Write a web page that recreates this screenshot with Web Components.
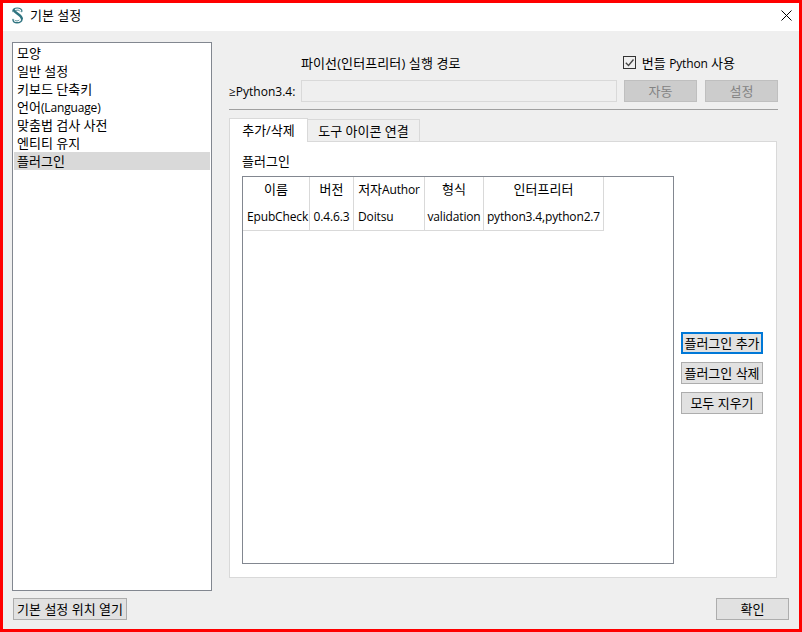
<!DOCTYPE html>
<html lang="ko">
<head>
<meta charset="utf-8">
<title>기본 설정</title>
<style>
html, body { margin: 0; padding: 0; background: #efefef; }
</style>
</head>
<body>
<prefs-window></prefs-window>

<script>
const FONT = `"Open Sans", "Noto Sans CJK KR", sans-serif`;

// latin runs are set tighter and smaller than the hangul next to them
class EnText extends HTMLElement {
    constructor() {
        super();
        this.attachShadow({ mode: 'open' });
        this.shadowRoot.innerHTML = `<style>:host { font-size: 12px; letter-spacing: -.15px; }</style><slot></slot>`;
    }
}
customElements.define('en-text', EnText);

class UiButton extends HTMLElement {
    static template = document.createElement('template');

    constructor() {
        super();
        this.attachShadow({ mode: 'open' });
        this.shadowRoot.append(UiButton.template.content.cloneNode(true));
    }
}
UiButton.template.innerHTML = `
<style>
:host {
    display: flex;
    box-sizing: border-box;
    align-items: center;
    justify-content: center;
    height: 22px;
    width: var(--w, 73px);
    padding-bottom: 1px;
    background: #e1e1e1;
    border: 1px solid #adadad;
    white-space: nowrap;
}
:host([disabled]) {
    background: #cccccc;
    border-color: #bfbfbf;
    color: #838383;
}
:host([focused]) {
    border: 2px solid #0078d7;
}
</style>
<slot></slot>
`;
customElements.define('ui-button', UiButton);

class TitleBar extends HTMLElement {
    constructor() {
        super();
        this.attachShadow({ mode: 'open' });
        this.shadowRoot.innerHTML = `
<style>
:host {
    display: flex;
    align-items: center;
    box-sizing: border-box;
    height: 28px;
    background: #fff;
    padding: 0 7px 4px 8px;
}
svg.logo { width: 13px; height: 17px; margin-right: 6px; }
.title { flex: 1; }
svg.close { width: 11px; height: 11px; }
</style>
<svg class="logo" viewBox="0 0 13 17" fill="none" stroke="#2f7480" stroke-linecap="round">
  <path d="M10.8 4.6C11.6 2.2 8.8 1 6.2 1 3.4 1 1.4 2.4 2 4.6" stroke-width="1.2"/>
  <path d="M3 3.2c.8 2.8 7.6 5 7.8 8.4" stroke-width="2.4"/>
  <path d="M10.8 11.6c.6 2.8-2 4.2-4.8 4.2-2.6 0-4.2-1.2-4-3.4" stroke-width="1.4"/>
  <path d="M5 3.4c1.6-.6 3.2-.4 4 .8M4 13.4c1.2.8 3 .8 4-.2" stroke-width=".8"/>
</svg>
<span class="title"><slot></slot></span>
<svg class="close" viewBox="0 0 11 11" stroke="#000" stroke-width="1"><path d="M.5.5l10 10M10.5.5l-10 10"/></svg>
`;
    }
}
customElements.define('title-bar', TitleBar);

class NavList extends HTMLElement {
    constructor() {
        super();
        this.attachShadow({ mode: 'open' });
        const sel = Number(this.getAttribute('selected'));
        const items = ['모양', '일반 설정', '키보드 단축키', '언어<en-text>(Language)</en-text>', '맞춤법 검사 사전', '엔티티 유지', '플러그인'];
        this.shadowRoot.innerHTML = `
<style>
:host {
    display: block;
    box-sizing: border-box;
    height: 549px;
    background: #fff;
    border: 1px solid #828790;
    padding: 1px;
}
div { height: 18px; line-height: 18px; padding-left: 3px; white-space: nowrap; }
div.sel { background: #d9d9d9; }
</style>
${items.map((t, i) => `<div class="${i === sel ? 'sel' : ''}">${t}</div>`).join('')}
`;
    }
}
customElements.define('nav-list', NavList);

class PythonPath extends HTMLElement {
    constructor() {
        super();
        this.attachShadow({ mode: 'open' });
        this.shadowRoot.innerHTML = `
<style>
:host { display: block; height: 56px; border-bottom: 1px solid #a0a0a0; }
.top { display: flex; align-items: center; box-sizing: border-box; height: 22px; padding: 0 0 2px 72px; }
.top .cap { flex: 1; letter-spacing: .1px; }
.check { display: flex; align-items: center; gap: 6px; margin-right: 43px; }
.box { width: 13px; height: 13px; margin-bottom: 1px; }
.row { display: flex; align-items: center; margin-top: 5px; height: 22px; }
.lbl { width: 72px; padding-top: 1px; white-space: nowrap; font-size: 12px; }
.field { width: 316px; height: 22px; box-sizing: border-box; background: #efefef; border: 1px solid #d9d9d9; margin-right: 7px; }
.row ui-button + ui-button { margin-left: 8px; }
</style>
<div class="top">
  <span class="cap">파이선(인터프리터) 실행 경로</span>
  <span class="check">
    <svg class="box" viewBox="0 0 13 13"><rect x=".5" y=".5" width="12" height="12" fill="none" stroke="#333"/><path d="M2.8 6.8l2.7 2.7 5-6" fill="none" stroke="#444" stroke-width="1.3"/></svg>
    <span>번들 <en-text>Python</en-text> 사용</span>
  </span>
</div>
<div class="row">
  <span class="lbl">≥Python3.4:</span>
  <span class="field"></span>
  <ui-button disabled>자동</ui-button>
  <ui-button disabled>설정</ui-button>
</div>
`;
    }
}
customElements.define('python-path', PythonPath);

class TabStrip extends HTMLElement {
    constructor() {
        super();
        this.attachShadow({ mode: 'open' });
        this.shadowRoot.innerHTML = `
<style>
:host { display: flex; align-items: flex-end; height: 24px; position: relative; z-index: 1; }
.tab { box-sizing: border-box; display: flex; align-items: center; justify-content: center; white-space: nowrap; border: 1px solid #d9d9d9; }
.on { width: 79px; height: 24px; padding-bottom: 1px; background: #fff; border-bottom: none; }
.off { width: 112px; height: 22px; margin-bottom: 1px; border-left: none; border-bottom: none; background: #efefef; }
</style>
<span class="tab on">추가/삭제</span>
<span class="tab off">도구 아이콘 연결</span>
`;
    }
}
customElements.define('tab-strip', TabStrip);

class PluginTable extends HTMLElement {
    constructor() {
        super();
        this.attachShadow({ mode: 'open' });
        this.shadowRoot.innerHTML = `
<style>
:host {
    display: block;
    box-sizing: border-box;
    width: 432px;
    height: 388px;
    background: #fff;
    border: 1px solid #828790;
}
table { border-collapse: separate; border-spacing: 0; table-layout: fixed; width: 361px; }
th, td { border-right: 1px solid #d9d9d9; font-weight: normal; white-space: nowrap; text-align: center; box-sizing: border-box; }
th { height: 27px; padding: 0 0 3px; }
td { height: 27px; padding: 0 0 1px; border-bottom: 1px solid #d9d9d9; font-size: 12px; letter-spacing: -.15px; }
td.l { text-align: left; padding-left: 4px; }
</style>
<table>
  <colgroup><col style="width:67px"><col style="width:44px"><col style="width:71px"><col style="width:59px"><col style="width:120px"></colgroup>
  <tr><th>이름</th><th>버전</th><th>저자<en-text>Author</en-text></th><th>형식</th><th>인터프리터</th></tr>
  <tr><td class="l">EpubCheck</td><td>0.4.6.3</td><td class="l">Doitsu</td><td>validation</td><td>python3.4,python2.7</td></tr>
</table>
`;
    }
}
customElements.define('plugin-table', PluginTable);

class PluginPane extends HTMLElement {
    constructor() {
        super();
        this.attachShadow({ mode: 'open' });
        this.shadowRoot.innerHTML = `
<style>
:host {
    display: block;
    box-sizing: border-box;
    width: 548px;
    height: 437px;
    margin-top: -1px;
    background: #fff;
    border: 1px solid #d9d9d9;
    padding: 11px 0 0 12px;
}
.cap { height: 23px; line-height: 16px; }
.body { display: flex; gap: 7px; }
.side { display: flex; flex-direction: column; gap: 8px; padding-top: 156px; --w: 82px; }
</style>
<div class="cap">플러그인</div>
<div class="body">
  <plugin-table></plugin-table>
  <div class="side">
    <ui-button focused>플러그인 추가</ui-button>
    <ui-button>플러그인 삭제</ui-button>
    <ui-button>모두 지우기</ui-button>
  </div>
</div>
`;
    }
}
customElements.define('plugin-pane', PluginPane);

class PrefsWindow extends HTMLElement {
    constructor() {
        super();
        this.attachShadow({ mode: 'open' });
        this.shadowRoot.innerHTML = `
<style>
:host {
    display: block;
    box-sizing: border-box;
    width: 802px;
    height: 632px;
    border: 3px solid #ff0000;
    background: #efefef;
    font: 13px/16px ${FONT};
    color: #000;
}
.main { display: grid; grid-template-columns: 200px 549px; column-gap: 17px; padding: 11px 0 0 9px; }
.right { padding-top: 11px; }
tab-strip { margin-top: 8px; }
.foot { display: flex; justify-content: space-between; padding: 7px 10px 0 10px; }
</style>
<title-bar>기본 설정</title-bar>
<div class="main">
  <nav-list selected="6"></nav-list>
  <div class="right">
    <python-path></python-path>
    <tab-strip></tab-strip>
    <plugin-pane></plugin-pane>
  </div>
</div>
<div class="foot">
  <ui-button style="--w:114px">기본 설정 위치 열기</ui-button>
  <ui-button>확인</ui-button>
</div>
`;
    }
}
customElements.define('prefs-window', PrefsWindow);
</script>
</body>
</html>
